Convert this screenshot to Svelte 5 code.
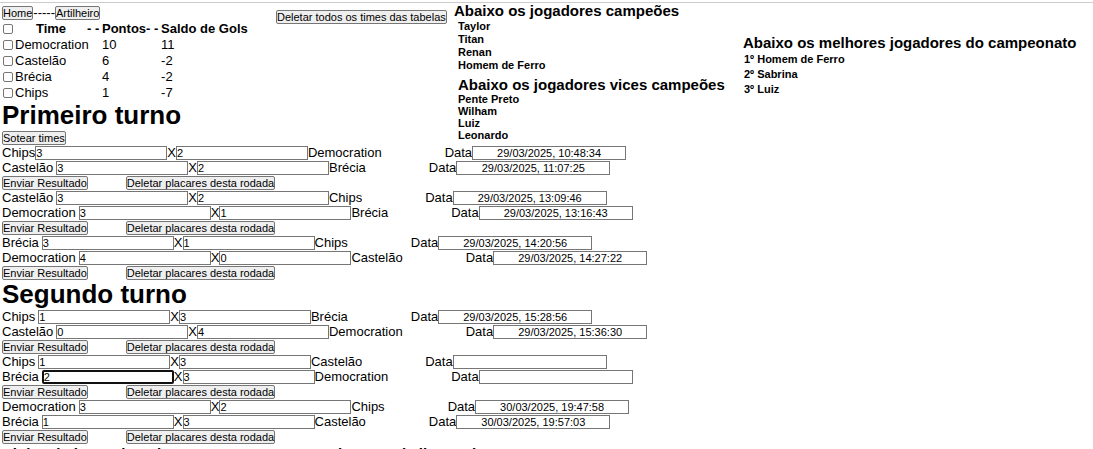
<script>
  const teams = [
    { name: 'Democration', points: 10, goals: 11 },
    { name: 'Castelão', points: 6, goals: -2 },
    { name: 'Brécia', points: 4, goals: -2 },
    { name: 'Chips', points: 1, goals: -7 }
  ];

  const champions = ['Taylor', 'Titan', 'Renan', 'Homem de Ferro'];
  const runnersUp = ['Pente Preto', 'Wilham', 'Luiz', 'Leonardo'];
  const best = ['1º Homem de Ferro', '2º Sabrina', '3º Luiz'];

  const firstLeg = [
    [
      { home: 'Chips', hs: '3', as: '2', away: 'Democration', date: '29/03/2025, 10:48:34', tight: true },
      { home: 'Castelão', hs: '3', as: '2', away: 'Brécia', date: '29/03/2025, 11:07:25' }
    ],
    [
      { home: 'Castelão', hs: '3', as: '2', away: 'Chips', date: '29/03/2025, 13:09:46' },
      { home: 'Democration', hs: '3', as: '1', away: 'Brécia', date: '29/03/2025, 13:16:43' }
    ],
    [
      { home: 'Brécia', hs: '3', as: '1', away: 'Chips', date: '29/03/2025, 14:20:56' },
      { home: 'Democration', hs: '4', as: '0', away: 'Castelão', date: '29/03/2025, 14:27:22' }
    ]
  ];

  const secondLeg = [
    [
      { home: 'Chips', hs: '1', as: '3', away: 'Brécia', date: '29/03/2025, 15:28:56' },
      { home: 'Castelão', hs: '0', as: '4', away: 'Democration', date: '29/03/2025, 15:36:30' }
    ],
    [
      { home: 'Chips', hs: '1', as: '3', away: 'Castelão', date: '' },
      { home: 'Brécia', hs: '2', as: '3', away: 'Democration', date: '', active: true }
    ],
    [
      { home: 'Democration', hs: '3', as: '2', away: 'Chips', date: '30/03/2025, 19:47:58' },
      { home: 'Brécia', hs: '1', as: '3', away: 'Castelão', date: '30/03/2025, 19:57:03' }
    ]
  ];
</script>

{#snippet rounds(list, leg)}
  {#each list as round, r}
    <form class="round" onsubmit={(e) => e.preventDefault()}>
      {#each round as m, i}
        {@const id = `${leg}-${r}-${i}`}
        <div class="match">
          <label class="home" class:tight={m.tight} for="h{id}">{m.home}</label>
          <input class="score" class:active={m.active} id="h{id}" value={m.hs} />
          <label class="versus" for="a{id}">X</label>
          <input class="score" id="a{id}" value={m.as} />
          <span class="away">{m.away}</span>
          <label for="d{id}">Data</label>
          <input class="date" id="d{id}" value={m.date} />
        </div>
      {/each}
      <div class="actions">
        <button type="submit">Enviar Resultado</button>
        <button type="button">Deletar placares desta rodada</button>
      </div>
    </form>
  {/each}
{/snippet}

<main>
  <header class="top">
    <section class="standings">
      <nav><button>Home</button><span>-----</span><button>Artilheiro</button></nav>
      <table>
        <thead>
          <tr>
            <td><input type="checkbox" aria-label="Todos" /></td>
            <th class="team">Time</th>
            <th class="dash">- -</th>
            <th>Pontos</th>
            <th class="dash">- -</th>
            <th>Saldo de Gols</th>
          </tr>
        </thead>
        <tbody>
          {#each teams as t}
            <tr>
              <td><input type="checkbox" aria-label={t.name} /></td>
              <td colspan="2">{t.name}</td>
              <td colspan="2">{t.points}</td>
              <td>{t.goals}</td>
            </tr>
          {/each}
        </tbody>
      </table>
      <h1>Primeiro turno</h1>
      <div class="actions"><button>Sotear times</button></div>
    </section>

    <div class="clear"><button>Deletar todos os times das tabelas</button></div>

    <section class="players">
      <h2>Abaixo os jogadores campeões</h2>
      <ul>
        {#each champions as p}<li>{p}</li>{/each}
      </ul>
      <h2 class="second">Abaixo os jogadores vices campeões</h2>
      <ul>
        {#each runnersUp as p}<li>{p}</li>{/each}
      </ul>
    </section>

    <section class="best">
      <h2>Abaixo os melhores jogadores do campeonato</h2>
      <ol>
        {#each best as p}<li>{p}</li>{/each}
      </ol>
    </section>
  </header>

  {@render rounds(firstLeg, 1)}
  <h1>Segundo turno</h1>
  {@render rounds(secondLeg, 2)}
  <div class="next">
    <h2>Digite abaixo os jogadores</h2>
    <h2>de turno da lista todos</h2>
  </div>
</main>

<style>
  :global(body) {
    background: #fff;
    overflow: hidden;
  }
  main {
    margin-top: 2px;
    padding-left: 2px;
    border-top: 1px solid #ccc;
    color: #000;
    font: 13px/15px "Liberation Sans", Arial, sans-serif;
    white-space: nowrap;
  }
  .top {
    display: grid;
    grid-template-columns: 274px 178px 289px 1fr;
    align-items: start;
  }
  nav {
    display: flex;
    height: 17px;
    padding-top: 1px;
    align-items: center;
  }
  button {
    height: 14px;
    padding: 0;
    border: 1px solid #767676;
    border-radius: 2px;
    background: #efefef;
    color: #000;
    font: 11px/12px "Liberation Sans", Arial, sans-serif;
  }
  table {
    border-collapse: collapse;
    line-height: 16px;
  }
  td,
  th {
    height: 16px;
    padding: 0;
    text-align: left;
  }
  input[type="checkbox"] {
    display: block;
    appearance: none;
    width: 10px;
    height: 10px;
    box-sizing: border-box;
    margin: 0 2px 0 1px;
    border: 1px solid #767676;
    border-radius: 2px;
    background: #fff;
  }
  .team {
    width: 72px;
    text-align: center;
  }
  .dash {
    width: 15px;
  }
  h1 {
    margin: 0;
    font-size: 26px;
    line-height: 29px;
  }
  .actions {
    display: flex;
    gap: 38px;
    height: 15px;
    align-items: center;
  }
  .clear {
    padding-top: 6px;
  }
  h2 {
    margin: 0;
    font-size: 15px;
    line-height: 15px;
  }
  ul,
  ol {
    margin: 0;
    padding: 0 0 0 4px;
    list-style: none;
    font-size: 11px;
    font-weight: bold;
    line-height: 12px;
  }
  .players ul {
    padding-top: 1px;
  }
  .players ul:first-of-type {
    padding-top: 2px;
    padding-bottom: 5px;
    line-height: 13px;
  }
  .second {
    padding-left: 4px;
  }
  .best {
    padding-top: 32px;
  }
  .best ol {
    padding-top: 2px;
    padding-left: 1px;
    line-height: 15px;
  }
  .match {
    display: flex;
    height: 15px;
    align-items: center;
  }
  .home {
    margin-right: 3px;
  }
  .home.tight {
    margin-right: 0;
  }
  .match input {
    box-sizing: border-box;
    height: 14px;
    margin: 0;
    padding: 0;
    border: 1px solid #767676;
    border-radius: 0;
    background: #fff;
    color: #000;
    font: 11px/12px "Liberation Sans", Arial, sans-serif;
  }
  .match .score {
    width: 132px;
  }
  .match .active {
    border: 2px solid #101010;
    border-radius: 2px;
  }
  .match .date {
    width: 154px;
    text-align: center;
  }
  .away {
    margin-right: 63px;
  }
  .next {
    display: flex;
    gap: 140px;
    padding-top: 2px;
  }
</style>
